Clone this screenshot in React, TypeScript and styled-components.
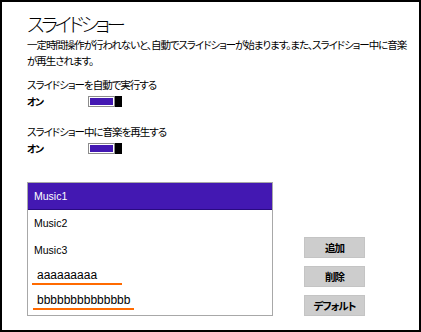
import React from "react";
import styled, { createGlobalStyle } from "styled-components";

const Global = createGlobalStyle`
  html, body { margin: 0; padding: 0; background: #fff; }
  * { box-sizing: border-box; }
`;

const Frame = styled.div`
  width: 421px;
  height: 332px;
  border: 2px solid #000;
  background: #fff;
  padding: 9px 0 0 25px;
  font-family: "Noto Sans CJK JP", "Liberation Sans", sans-serif;
  font-feature-settings: "palt";
  color: #000;
  display: flex;
  flex-direction: column;
`;

const Title = styled.h1`
  margin: 0;
  font-size: 19.5px;
  font-weight: 300;
  line-height: 26px;
  letter-spacing: -3.3px;
`;

const Desc = styled.p`
  margin: 0;
  font-size: 10.5px;
  line-height: 16px;
  white-space: nowrap;
  letter-spacing: -1.05px;
`;

const Setting = styled.div<{ $top: number }>`
  margin-top: ${(p) => p.$top}px;
  display: flex;
  flex-direction: column;
`;

const Label = styled.div`
  font-size: 10.5px;
  line-height: 16px;
  letter-spacing: -1px;
`;

const StateRow = styled.div`
  display: flex;
  align-items: center;
  height: 17px;
`;

const StateText = styled.span`
  width: 61px;
  font-size: 10px;
  font-weight: 700;
  letter-spacing: -1.5px;
`;

const Track = styled.div`
  display: flex;
  height: 11px;
`;

const TrackFill = styled.div`
  width: 27px;
  height: 11px;
  border: 1px solid #8c8c8c;
  background: #4318b2;
  box-shadow: inset 0 0 0 1px #fff;
`;

const Thumb = styled.div`
  width: 7px;
  height: 11px;
  background: #000;
`;

const Bottom = styled.div`
  margin-top: 25px;
  display: flex;
  align-items: flex-end;
  gap: 31px;
`;

const List = styled.div`
  width: 246px;
  height: 134px;
  border: 1px solid #a8a8a8;
  display: flex;
  flex-direction: column;
`;

const Item = styled.div<{ $selected?: boolean; $h: number; $big?: boolean }>`
  height: ${(p) => p.$h}px;
  display: flex;
  align-items: center;
  padding-left: 6px;
  font-family: "Liberation Sans", Arial, sans-serif;
  font-size: ${(p) => (p.$big ? 12 : 10.5)}px;
  background: ${(p) => (p.$selected ? "#4318b2" : "#fff")};
  color: ${(p) => (p.$selected ? "#fff" : "#000")};
  border-bottom: ${(p) => (p.$selected ? "1px solid #2a0a80" : "none")};
`;

const Marked = styled.span<{ $w: number; $shift: number }>`
  display: inline-block;
  width: ${(p) => p.$w}px;
  margin-left: ${(p) => p.$shift}px;
  padding-left: ${(p) => 3 - p.$shift}px;
  border-bottom: 2px solid #ff6a00;
  line-height: 14px;
  padding-bottom: 1px;
`;

const Buttons = styled.div`
  display: flex;
  flex-direction: column;
  gap: 8px;
`;

const Button = styled.button`
  width: 61px;
  height: 21px;
  border: 1px solid #c4c4c4;
  background: #cdcdcd;
  font-family: "Noto Sans CJK JP", sans-serif;
  font-feature-settings: "palt";
  font-size: 10.5px;
  font-weight: 700;
  padding: 0;
  color: #000;
  letter-spacing: -1px;
`;

function Toggle() {
  return (
    <Track>
      <TrackFill />
      <Thumb />
    </Track>
  );
}

export default function App() {
  return (
    <>
      <Global />
      <Frame>
        <Title>スライドショー</Title>
        <Desc>
          一定時間操作が行われないと、自動でスライドショーが始まります。また、スライドショー中に音楽
          <br />
          が再生されます。
        </Desc>
        <Setting $top={8}>
          <Label>スライドショーを自動で実行する</Label>
          <StateRow>
            <StateText>オン</StateText>
            <Toggle />
          </StateRow>
        </Setting>
        <Setting $top={14}>
          <Label>スライドショー中に音楽を再生する</Label>
          <StateRow>
            <StateText>オン</StateText>
            <Toggle />
          </StateRow>
        </Setting>
        <Bottom>
          <List>
            <Item $selected $h={27}>Music1</Item>
            <Item $h={26}>Music2</Item>
            <Item $h={27}>Music3</Item>
            <Item $h={26} $big>
              <Marked $w={90} $shift={-2}>aaaaaaaaa</Marked>
            </Item>
            <Item $h={24} $big>
              <Marked $w={101} $shift={-1}>bbbbbbbbbbbbbb</Marked>
            </Item>
          </List>
          <Buttons>
            <Button>追加</Button>
            <Button>削除</Button>
            <Button>デフォルト</Button>
          </Buttons>
        </Bottom>
      </Frame>
    </>
  );
}
